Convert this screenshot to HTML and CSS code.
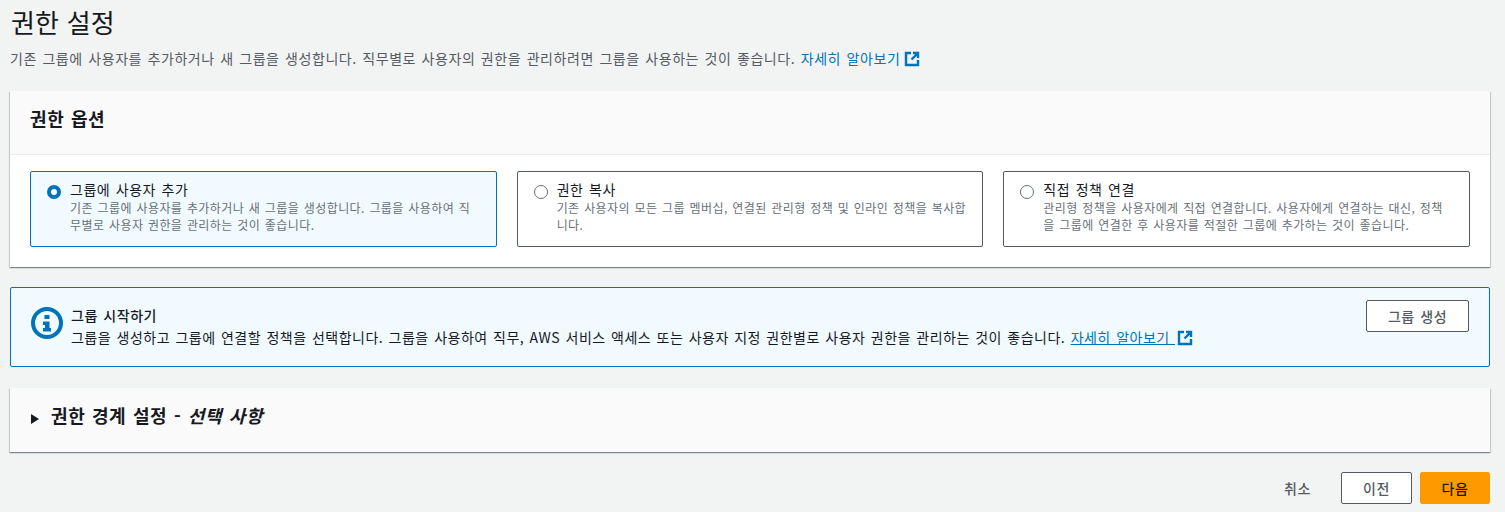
FILE: index.html
```html
<!DOCTYPE html>
<html lang="ko">
<head>
<meta charset="utf-8">
<title>권한 설정</title>
<link rel="stylesheet" href="styles.css">
</head>
<body>
<main class="page">
  <header class="page-head">
    <h1 class="page-title">권한 설정</h1>
    <p class="page-desc">기존 그룹에 사용자를 추가하거나 새 그룹을 생성합니다. 직무별로 사용자의 권한을 관리하려면 그룹을 사용하는 것이 좋습니다. <a class="link" href="#">자세히 알아보기</a><svg class="ext" viewBox="0 0 16 16"><path d="M7 2H2v12h12V9" /><path d="M9 2h5v5M14 2 7.5 8.5"/></svg></p>
  </header>

  <section class="card">
    <div class="card-head"><h2 class="card-title">권한 옵션</h2></div>
    <div class="tiles">
      <div class="tile tile-on">
        <span class="radio radio-on"></span>
        <div class="tile-text">
          <div class="tile-label">그룹에 사용자 추가</div>
          <div class="tile-desc">기존 그룹에 사용자를 추가하거나 새 그룹을 생성합니다. 그룹을 사용하여 직무별로 사용자 권한을 관리하는 것이 좋습니다.</div>
        </div>
      </div>
      <div class="tile">
        <span class="radio"></span>
        <div class="tile-text">
          <div class="tile-label">권한 복사</div>
          <div class="tile-desc">기존 사용자의 모든 그룹 멤버십, 연결된 관리형 정책 및 인라인 정책을 복사합니다.</div>
        </div>
      </div>
      <div class="tile">
        <span class="radio"></span>
        <div class="tile-text">
          <div class="tile-label">직접 정책 연결</div>
          <div class="tile-desc">관리형 정책을 사용자에게 직접 연결합니다. 사용자에게 연결하는 대신, 정책을 그룹에 연결한 후 사용자를 적절한 그룹에 추가하는 것이 좋습니다.</div>
        </div>
      </div>
    </div>
  </section>

  <section class="alert">
    <svg class="alert-icon" viewBox="0 0 32 32"><circle cx="16" cy="16" r="14" /><rect class="solid" x="13.5" y="8" width="5" height="4"/><path class="solid" d="M12 14.500h6.500V21H20v3.500h-8V21h2v-3h-2z"/></svg>
    <div class="alert-text">
      <div class="alert-title">그룹 시작하기</div>
      <div class="alert-body">그룹을 생성하고 그룹에 연결할 정책을 선택합니다. 그룹을 사용하여 직무, AWS 서비스 액세스 또는 사용자 지정 권한별로 사용자 권한을 관리하는 것이 좋습니다. <a class="link link-under" href="#">자세히 알아보기 </a><svg class="ext ext-tight" viewBox="0 0 16 16"><path d="M7 2H2v12h12V9" /><path d="M9 2h5v5M14 2 7.5 8.5"/></svg></div>
    </div>
    <button class="btn alert-btn" type="button">그룹 생성</button>
  </section>

  <section class="card expander">
    <svg class="caret" viewBox="1 1 8 10"><path d="M1 1l8 5-8 5z"/></svg>
    <h2 class="card-title">권한 경계 설정 - <em>선택 사항</em></h2>
  </section>

  <footer class="actions">
    <button class="btn btn-plain" type="button">취소</button>
    <button class="btn btn-prev" type="button">이전</button>
    <button class="btn btn-primary" type="button">다음</button>
  </footer>
</main>
</body>
</html>
```
FILE: styles.css
```css
* { box-sizing: border-box; }
html, body { margin: 0; padding: 0; height: 512px; overflow: hidden; }
body {
  background: #f2f3f3;
  color: #16191f;
  font-family: "Noto Sans CJK KR", "Noto Sans", sans-serif;
  font-size: 14px;
  line-height: 20px;
}
.page { padding: 0 15px 0 10px; }
.page-head { height: 91px; }
.page-title { margin: 0; padding: 0 0 0 1px; font-size: 26px; line-height: 44px; font-weight: 400; letter-spacing: .2px; }
.page-desc { margin: 4px 0 0; color: #545b64; font-size: 14px; line-height: 20px; letter-spacing: .57px; word-spacing: 1px; }
.link { color: #0073bb; text-decoration: none; }
.link-under { text-decoration: underline; }
.ext { width: 16px; height: 16px; margin-left: 4px; vertical-align: -3px; fill: none; stroke: #0073bb; stroke-width: 2.4; }
.ext-tight { margin-left: 2px; }
.card { background: #fff; box-shadow: 0 1px 1px 0 rgba(0,28,36,.3), 1px 1px 1px 0 rgba(0,28,36,.15), -1px 1px 1px 0 rgba(0,28,36,.15); }
.card-head { height: 64px; padding: 0 20px 9px; display: flex; align-items: center; background: #fafafa; border-bottom: 1px solid #eaeded; }
.card-title { margin: 0; font-size: 18px; line-height: 24px; font-weight: 700; letter-spacing: .6px; word-spacing: 1px; }
.tiles { display: grid; grid-template-columns: repeat(3, 1fr); gap: 20px; padding: 16px 20px 20px; }
.tile { height: 76px; display: flex; gap: 9px; padding: 8px 16px; background: #fff; border: 1px solid #545b64; border-radius: 2px; }
.tile-on { background: #f1faff; border-color: #0073bb; }
.radio { flex: none; width: 14px; height: 14px; margin-top: 5px; border: 1px solid #687078; border-radius: 50%; background: #fff; }
.radio-on { border: 4px solid #0073bb; }
.tile-label { font-size: 14px; line-height: 19px; letter-spacing: .55px; word-spacing: 1px; }
.tile-desc { font-size: 12px; line-height: 17px; color: #687078; letter-spacing: .42px; word-spacing: .8px; }
.alert { height: 80px; margin-top: 20px; padding: 12px 20px; display: flex; gap: 8px; background: #f1faff; border: 1px solid #0073bb; border-radius: 2px; }
.alert-icon { flex: none; width: 32px; height: 32px; margin-top: 7px; fill: none; stroke: #0073bb; stroke-width: 4; }
.alert-icon .solid { fill: #0073bb; stroke: none; }
.alert-text { flex: 1; padding-top: 5px; font-size: 14px; line-height: 20px; letter-spacing: .49px; word-spacing: 1px; }
.alert-title { line-height: 20px; font-weight: 500; letter-spacing: .55px; }
.alert-body { margin-top: 2px; }
.btn { font: inherit; font-size: 14px; font-weight: 500; letter-spacing: .55px; word-spacing: 1px; color: #545b64; height: 32px; background: #fff; border: 1px solid #545b64; border-radius: 2px; padding: 0; }
.alert-btn { flex: none; width: 103px; }
.expander { height: 64px; margin-top: 21px; padding: 0 21px 11px; display: flex; align-items: center; gap: 12px; background: #fafafa; }
.caret { width: 8px; height: 10px; margin-top: 8px; fill: #16191f; }
.expander em { font-style: italic; }
.actions { margin-top: 20px; display: flex; justify-content: flex-end; align-items: center; gap: 8px; }
.btn-plain { width: 61px; margin-right: 5px; background: none; border: 0; }
.btn-prev { width: 71px; }
.btn-primary { width: 70px; background: #ff9900; border-color: #ff9900; color: #16191f; }
```
